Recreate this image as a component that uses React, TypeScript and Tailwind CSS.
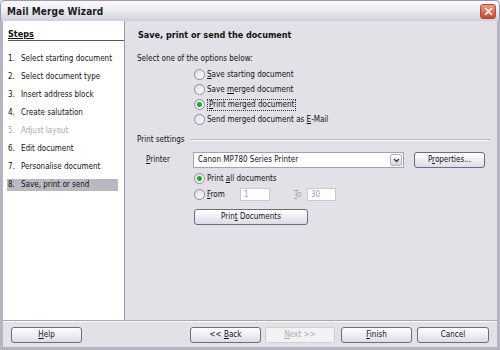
import React from 'react';

const U = ({ children }: { children: React.ReactNode }) => <span className="underline underline-offset-1">{children}</span>;

function Radio({ checked }: { checked?: boolean }) {
  return (
    <span className="w-[11px] h-[11px] rounded-full border border-[#8d8ca0] bg-gradient-to-br from-[#dcdce4] to-white flex items-center justify-center shrink-0">
      {checked && <span className="w-[5px] h-[5px] rounded-full bg-[#2aa52a]" />}
    </span>
  );
}

function Btn({ children, w, disabled }: { children: React.ReactNode; w: string; disabled?: boolean }) {
  return (
    <div
      className={
        disabled
          ? `${w} h-[16px] rounded-[3px] border border-[#cfcfd6] bg-[#f2f2f2] text-[#ababb4] flex items-center justify-center`
          : `${w} h-[16px] rounded-[3px] border border-[#6b6b86] bg-gradient-to-b from-white to-[#dcdce6] text-[#111] flex items-center justify-center`
      }
    >
      <span>{children}</span>
    </div>
  );
}

export default function App() {
  const steps = [
    'Select starting document',
    'Select document type',
    'Insert address block',
    'Create salutation',
    'Adjust layout',
    'Edit document',
    'Personalise document',
    'Save, print or send',
  ];

  return (
    <div className="w-[500px] h-[350px] flex flex-col bg-[#e2e1e7] text-[#111] text-[8px] font-['DejaVu_Sans_Condensed','Liberation_Sans',sans-serif] overflow-hidden">
      {/* title bar */}
      <div className="h-[21px] shrink-0 flex items-center justify-between pl-[6px] pr-[3px] bg-gradient-to-b from-[#fbfbfd] via-[#ebebf1] to-[#cfcfdb] border-t border-x border-[#9a9aae] rounded-t-[5px]">
        <span className="text-[10px] font-bold text-[#1b1b1b] tracking-[0.1px]">Mail Merge Wizard</span>
        <div className="w-[16px] h-[15px] rounded-[3px] border border-[#b04a3a] bg-gradient-to-b from-[#f29a86] to-[#c9452e] flex items-center justify-center">
          <svg width="9" height="9" viewBox="0 0 9 9">
            <path d="M1.5 1.5 L7.5 7.5 M7.5 1.5 L1.5 7.5" stroke="white" strokeWidth="1.6" strokeLinecap="round" />
          </svg>
        </div>
      </div>

      <div className="flex-1 flex flex-col border-x-[3px] border-b-[3px] border-[#b4b4c2]">
        {/* main */}
        <div className="h-[300px] flex border-b border-[#a8a8b4]">
          {/* steps */}
          <div className="w-[122px] bg-white border-r border-[#9c9ca8] flex flex-col">
            <div className="ml-[5px] mt-[9px] h-[11px] border-b border-[#555] flex items-center">
              <span className="font-bold text-[9px] underline underline-offset-1">Steps</span>
            </div>
            <div className="mt-[9px] flex flex-col">
              {steps.map((s, i) => (
                <div key={s} className="h-[18px] flex items-center">
                  <div
                    className={`ml-[4px] w-[111px] h-[12px] flex items-center pl-[1px] ${i === 7 ? 'bg-[#b9b9c2]' : ''} ${i === 4 ? 'text-[#a9a9b0]' : ''}`}
                  >
                    <span className="w-[13px]">{i + 1}.</span>
                    <span>{s}</span>
                  </div>
                </div>
              ))}
            </div>
          </div>

          {/* content */}
          <div className="flex-1 flex flex-col pl-[12px] pr-[7px]">
            <div className="mt-[9px] h-[12px] flex items-center pl-[1px] font-bold text-[9px]">Save, print or send the document</div>
            <div className="mt-[11px] h-[12px] flex items-center">Select one of the options below:</div>
            <div className="mt-[2px] flex flex-col pl-[57px]">
              <div className="h-[15px] flex items-center gap-[2px]">
                <Radio />
                <span><U>S</U>ave starting document</span>
              </div>
              <div className="h-[15px] flex items-center gap-[2px]">
                <Radio />
                <span>Save <U>m</U>erged document</span>
              </div>
              <div className="h-[15px] flex items-center gap-[2px]">
                <Radio checked />
                <span className="border border-dotted border-[#333] px-[1px] leading-[10px]"><U>P</U>rint merged document</span>
              </div>
              <div className="h-[15px] flex items-center gap-[2px]">
                <Radio />
                <span>Send merged document as <U>E</U>-Mail</span>
              </div>
            </div>

            <div className="mt-[7px] h-[12px] flex items-center gap-[5px]">
              <span>Print settings</span>
              <div className="flex-1 border-t border-[#b7b7c2] border-b border-b-white" />
            </div>

            <div className="mt-[6px] h-[16px] flex items-center">
              <span className="w-[56px] pl-[9px]"><U>P</U>rinter</span>
              <div className="w-[211px] h-[16px] bg-white border border-[#a2a2b6] flex items-center justify-between pl-[4px] pr-[1px]">
                <span>Canon MP780 Series Printer</span>
                <div className="w-[12px] h-[12px] rounded-[2px] border border-[#b2b2c4] bg-gradient-to-b from-white to-[#d6d6e2] flex items-center justify-center">
                  <svg width="7" height="5" viewBox="0 0 7 5">
                    <path d="M1 1 L3.5 3.5 L6 1" stroke="#3a3a4a" strokeWidth="1.4" fill="none" />
                  </svg>
                </div>
              </div>
              <div className="ml-[10px]">
                <Btn w="w-[71px]">P<U>r</U>operties...</Btn>
              </div>
            </div>

            <div className="mt-[3px] h-[15px] flex items-center gap-[2px] pl-[57px]">
              <Radio checked />
              <span>Print <U>a</U>ll documents</span>
            </div>
            <div className="mt-[1px] h-[15px] flex items-center pl-[57px]">
              <Radio />
              <span className="ml-[2px] w-[33px]"><U>F</U>rom</span>
              <div className="w-[30px] h-[13px] bg-white border border-[#c9c9d2] text-[#a0a0a8] pl-[3px] flex items-center">1</div>
              <span className="ml-[24px] w-[13px] text-[#a0a0a8]"><U>T</U>o</span>
              <div className="w-[29px] h-[13px] bg-white border border-[#c9c9d2] text-[#a0a0a8] pl-[3px] flex items-center">30</div>
            </div>
            <div className="mt-[7px] pl-[57px]">
              <Btn w="w-[114px]">Prin<U>t</U> Documents</Btn>
            </div>
          </div>
        </div>

        {/* buttons */}
        <div className="flex-1 border-t border-white flex items-center pl-[8px]">
          <Btn w="w-[71px]"><U>H</U>elp</Btn>
          <div className="ml-[108px]">
            <Btn w="w-[71px]">&lt;&lt; <U>B</U>ack</Btn>
          </div>
          <div className="ml-[4px]">
            <Btn w="w-[70px]" disabled><U>N</U>ext &gt;&gt;</Btn>
          </div>
          <div className="ml-[6px]">
            <Btn w="w-[71px]"><U>F</U>inish</Btn>
          </div>
          <div className="ml-[5px]">
            <Btn w="w-[72px]">Cancel</Btn>
          </div>
        </div>
      </div>
    </div>
  );
}
